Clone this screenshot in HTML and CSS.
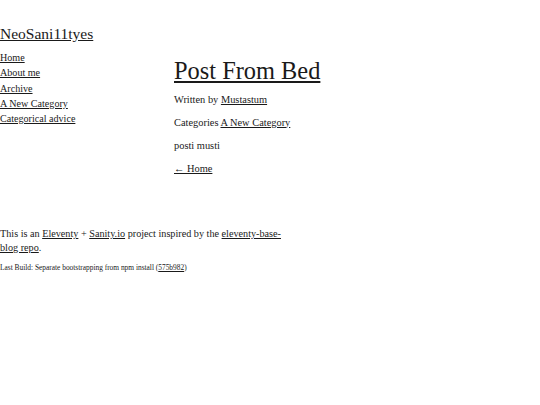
FILE: index.html
```html
<!DOCTYPE html>
<html lang="en">
<head>
<meta charset="utf-8">
<title>Post From Bed</title>
<link rel="stylesheet" href="styles.css">
</head>
<body>
<header class="site-header">
  <h1 class="site-title"><a href="#">NeoSani11tyes</a></h1>
</header>
<div class="layout">
  <nav class="nav">
    <ul class="nav-list">
      <li><a href="#">Home</a></li>
      <li><a href="#">About me</a></li>
      <li><a href="#">Archive</a></li>
      <li><a href="#">A New Category</a></li>
      <li><a href="#">Categorical advice</a></li>
    </ul>
  </nav>
  <main class="main">
    <h2 class="post-title"><a href="#">Post From Bed</a></h2>
    <p class="para">Written by <a href="#">Mustastum</a></p>
    <p class="para">Categories <a href="#">A New Category</a></p>
    <p class="para">posti musti</p>
    <p class="para"><a href="#">← Home</a></p>
  </main>
</div>
<footer class="footer">
  <p class="footer-text">This is an <a href="#">Eleventy</a> + <a href="#">Sanity.io</a> project inspired by the <a href="#">eleventy-base-blog repo</a>.</p>
  <p class="build">Last Build: Separate bootstrapping from npm install (<a href="#">575b982</a>)</p>
</footer>
</body>
</html>
```
FILE: styles.css
```css
html, body {
  margin: 0;
  padding: 0;
  background: #fff;
}
body {
  font-family: "Liberation Serif", "DejaVu Serif", serif;
  color: #1a1a1a;
  font-size: 10.4px;
}
a {
  color: #1a1a1a;
  text-decoration: underline;
}
.site-header {
  padding-top: 24px;
}
.site-title {
  margin: 0;
  font-weight: normal;
  font-size: 15.5px;
  line-height: 20px;
}
.layout {
  display: flex;
  margin-top: 6px;
}
.nav {
  width: 174px;
  flex: none;
  font-size: 10.1px;
}
.nav-list {
  list-style: none;
  margin: 0;
  padding: 0;
  line-height: 15.3px;
}
.main {
  flex: 1;
  padding-top: 7px;
}
.post-title {
  margin: 0;
  font-weight: normal;
  font-size: 24.4px;
  line-height: 28px;
}
.para {
  margin: 6.5px 0 0;
  line-height: 15px;
}
.para + .para {
  margin-top: 8px;
}
.footer {
  margin-top: 51.5px;
  width: 292px;
  font-size: 10.2px;
}
.footer-text {
  margin: 0;
  line-height: 14px;
}
.build {
  margin: 7.5px 0 0;
  font-size: 7.4px;
  line-height: 10px;
}
```
